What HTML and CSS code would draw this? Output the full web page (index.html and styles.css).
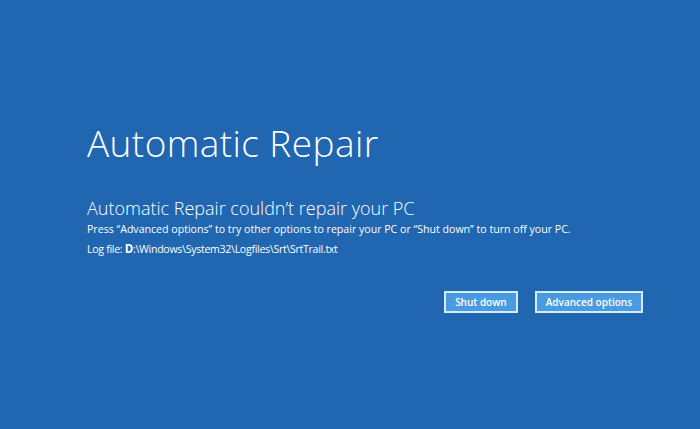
FILE: index.html
```html
<!DOCTYPE html>
<html lang="en">
<head>
	<meta charset="UTF-8">
	<title>Automatic Repair</title>
	<link rel="stylesheet" href="styles.css">
</head>
<body>
	<div class="screen">
		<h1 class="title">Automatic Repair</h1>
		<h2 class="subtitle">Automatic Repair couldn&#8217;t repair your PC</h2>
		<p class="message">Press &ldquo;Advanced options&rdquo; to try other options to repair your PC or &ldquo;Shut down&rdquo; to turn off your PC.</p>
		<p class="message log">Log file: <b>D</b>:\Windows\System32\Logfiles\Srt\SrtTrail.txt</p>
		<div class="buttons">
			<button class="btn">Shut down</button>
			<button class="btn">Advanced options</button>
		</div>
	</div>
</body>
</html>
```

FILE: styles.css
```css
html, body {
	margin: 0;
	padding: 0;
}

body {
	background: #2066b0;
	color: #ffffff;
	font-family: "Open Sans", "Liberation Sans", sans-serif;
	width: 700px;
	height: 429px;
	overflow: hidden;
}

.screen {
	padding: 119px 0 0 87px;
	width: 556px;
}

.title {
	margin: 0;
	font-size: 37px;
	font-weight: 300;
	line-height: 48px;
	letter-spacing: 0.4px;
}

.subtitle {
	margin: 31px 0 0;
	font-size: 18px;
	font-weight: 300;
	line-height: 21px;
}

.message {
	margin: 0;
	font-size: 10.6px;
	line-height: 20px;
}

.log {
	letter-spacing: -0.3px;
}

.message b {
	font-weight: 700;
	font-size: 11.5px;
}

.buttons {
	display: flex;
	justify-content: flex-end;
	gap: 17px;
	margin-top: 32px;
}

.btn {
	height: 22px;
	padding: 0 9px;
	background: #4a9ae0;
	color: #ffffff;
	border: 2px solid #d4ecfb;
	font-family: "Open Sans", "Liberation Sans", sans-serif;
	font-size: 10px;
	font-weight: 600;
	cursor: pointer;
}
```
